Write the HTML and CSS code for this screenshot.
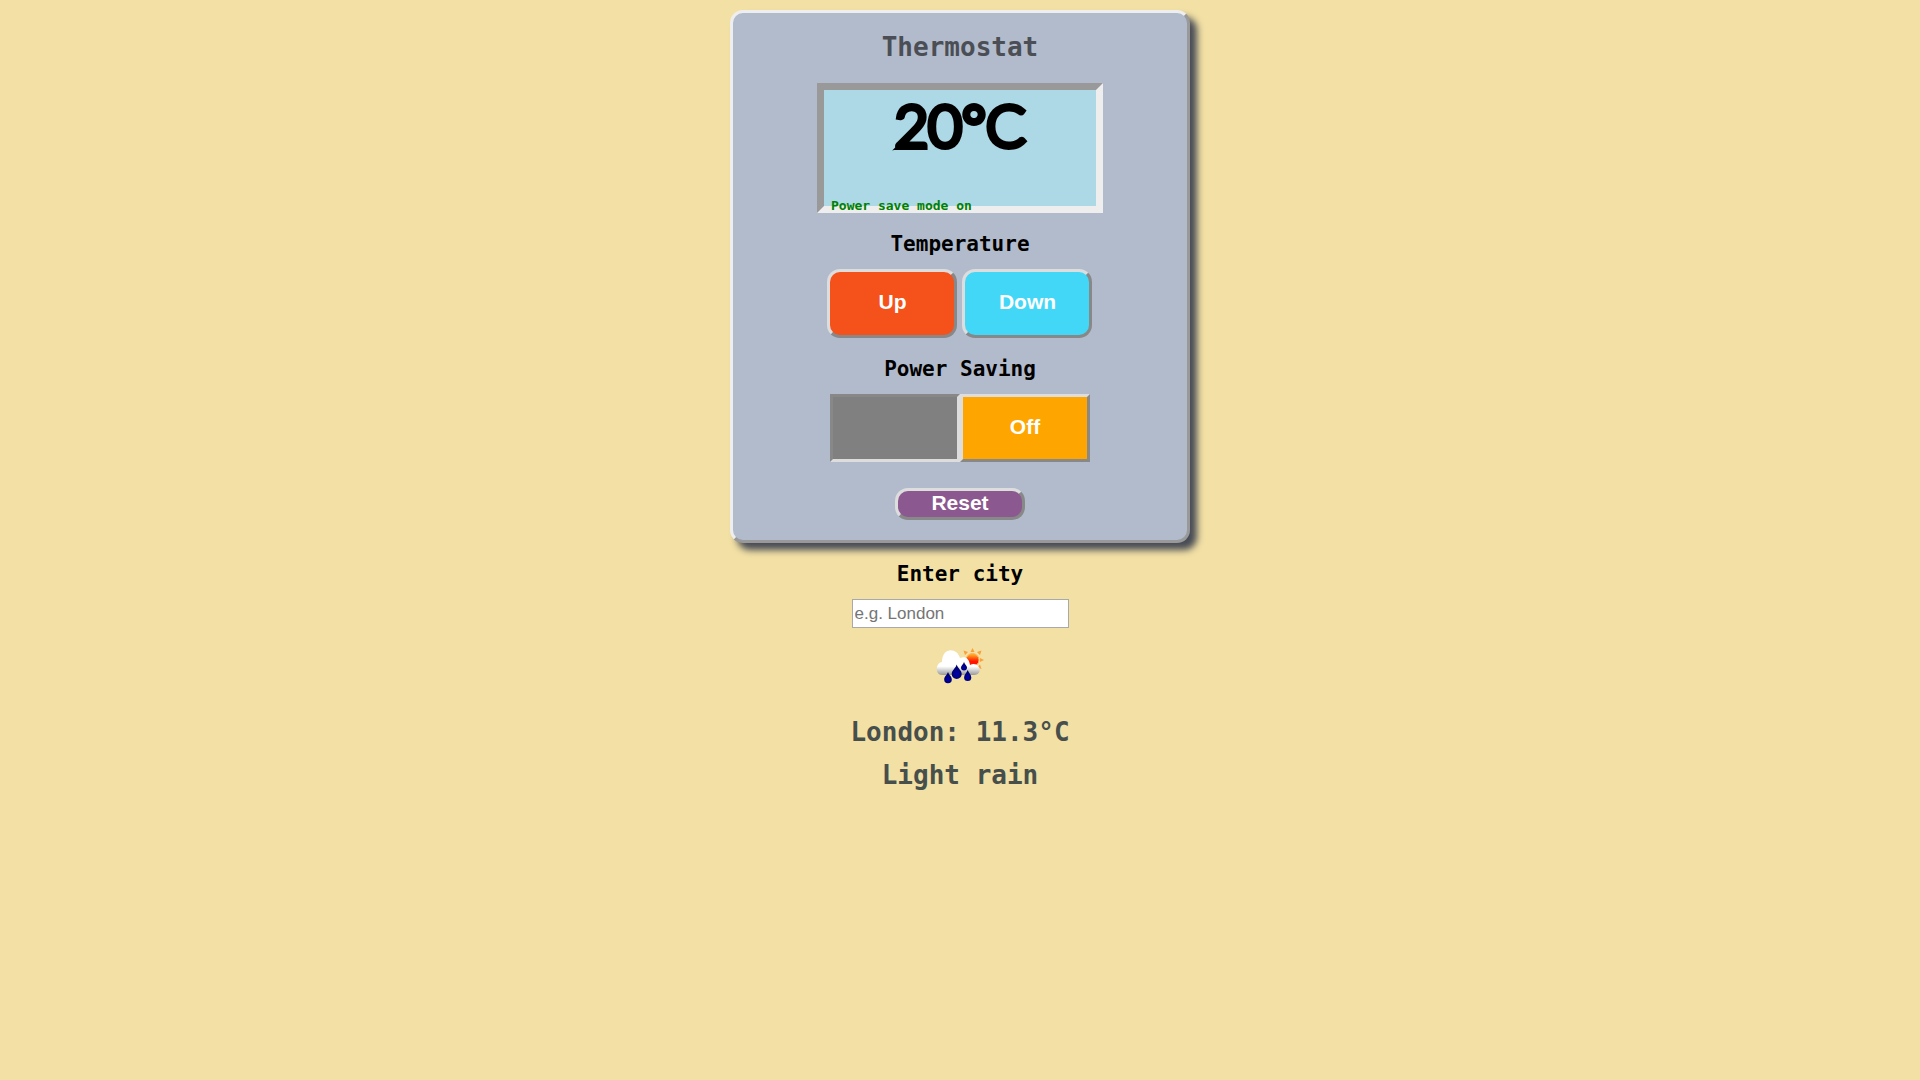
FILE: index.html
```html
<!DOCTYPE html>
<html lang="en">
<head>
<meta charset="utf-8">
<title>Thermostat</title>
<link rel="stylesheet" href="styles.css">
</head>
<body>
<main class="page">
  <section class="thermostat">
    <h1 class="title">Thermostat</h1>
    <div class="display">
      <p class="temperature">20°C</p>
      <p class="power-status">Power save mode on</p>
    </div>
    <h2 class="label">Temperature</h2>
    <div class="controls">
      <button class="button up" type="button">Up</button>
      <button class="button down" type="button">Down</button>
    </div>
    <h2 class="label">Power Saving</h2>
    <div class="switch">
      <button class="button pressed" type="button" aria-label="On" aria-pressed="true"></button>
      <button class="button off" type="button">Off</button>
    </div>
    <button class="button reset" type="button">Reset</button>
  </section>
  <section class="weather">
    <label class="label" for="city">Enter city</label>
    <input class="city" id="city" type="text" placeholder="e.g. London">
    <svg class="icon" viewBox="0 0 50 50" role="img" aria-label="Light rain">
      <defs>
        <linearGradient id="sun" x1="0" y1="0" x2="0" y2="1">
          <stop offset="0.1" stop-color="#ffa820"/><stop offset="0.6" stop-color="#ff1400"/>
        </linearGradient>
        <linearGradient id="cloud" x1="0" y1="0" x2="0" y2="1">
          <stop offset="0.65" stop-color="#fff"/><stop offset="1" stop-color="#999"/>
        </linearGradient>
        <radialGradient id="drop" cx="0.5" cy="0.65" r="0.6">
          <stop offset="0" stop-color="#0000b4"/><stop offset="1" stop-color="#000058"/>
        </radialGradient>
      </defs>
      <path fill="#f9a03a" d="M37.500 6l2 4h-4zM46.500 8.500l-1.500 4.500-3-3zM49 18l-4 2v-4zM46.500 27l-4.500-1.500 3-3zM28.500 8.500l4.500 1.500-3 3z"/>
      <circle cx="37.500" cy="18" r="6.500" fill="url(#sun)" stroke="#ffb057" stroke-width="1"/>
      <path fill="url(#cloud)" d="M7 33C0 33 0 21 7 20C7 5 22 5 25 16C30 14 34 16 35 23C38 21 42 22 43 24C47 28 44 33 39 33Z"/>
      <g fill="url(#drop)">
        <path d="M13 30c1 3 3.800 4.500 3.800 7.500a3.800 3.800 0 0 1-7.600 0c0-3 2.800-4.500 3.800-7.500z"/>
        <path d="M21.700 22.500c1.300 4 5 6 5 9.500a5 5 0 0 1-10 0c0-3.500 3.700-5.500 5-9.500z"/>
        <path d="M29 20c.8 2.500 3 3.500 3 5.500a3 3 0 0 1-6 0c0-2 2.200-3 3-5.500z"/>
        <path d="M32.700 28c1 3 3.600 4.500 3.600 7.500a3.600 3.600 0 0 1-7.200 0c0-3 2.600-4.500 3.600-7.500z"/>
      </g>
    </svg>
    <p class="report">London: 11.3°C</p>
    <p class="report">Light rain</p>
  </section>
</main>
</body>
</html>
```
FILE: styles.css
```css
* {
  box-sizing: border-box;
}

body {
  margin: 0;
  background: #f2e0a5;
  font-family: "DejaVu Sans Mono", monospace;
  font-weight: bold;
}

h1,
h2,
p {
  margin: 0;
}

.page {
  display: flex;
  flex-direction: column;
  align-items: center;
  padding: 10px 0;
}

.thermostat {
  display: flex;
  flex-direction: column;
  align-items: center;
  width: 24%;
  min-width: 320px;
  padding: 19px 0 20px;
  border: 3px solid;
  border-color: #eee #999 #999 #eee;
  border-radius: 13px;
  background: #b2bbcc;
  box-shadow: 7px 7px 7px #474b55;
}

.title {
  font-size: 26px;
  line-height: 30px;
  color: #4b4f55;
}

.display {
  position: relative;
  width: 286px;
  height: 130px;
  margin-top: 21px;
  border: 7px solid;
  border-color: #999 #eee #eee #999;
  background: lightblue;
}

.temperature {
  font-family: Lato, sans-serif;
  font-weight: 300;
  font-size: 58px;
  line-height: 69px;
  text-align: center;
  -webkit-text-stroke: 6px #000;
  stroke-linejoin: round;
}

.power-status {
  position: absolute;
  left: 7px;
  bottom: -8px;
  font-size: 13px;
  line-height: 16px;
  color: green;
}

.label {
  margin: 19px 0 13px;
  font-size: 21px;
  line-height: 24px;
}

.controls {
  display: flex;
  gap: 5px;
}

.switch {
  display: flex;
}

.button {
  width: 130px;
  height: 69px;
  padding: 0 0 3px;
  border: 3px solid;
  border-color: #ddd #888 #888 #ddd;
  font: bold 21px "Liberation Sans", Arial, sans-serif;
  color: #fff;
}

.up,
.down {
  border-radius: 13px;
}

.up {
  background: #f4511b;
}

.down {
  background: #43d7f7;
}

.switch .button {
  height: 68px;
}

.pressed {
  border-color: #888 #ddd #ddd #888;
  background: gray;
}

.off {
  background: orange;
}

.reset {
  height: 32px;
  margin-top: 26px;
  border-radius: 13px;
  background: #8b588f;
  line-height: 23px;
}

.weather {
  display: flex;
  flex-direction: column;
  align-items: center;
}

.city {
  width: 217px;
  height: 29px;
  padding: 1px 2px;
  border: 1px solid #a9a9a9;
  background: #fff;
  font: 17px "Liberation Sans", Arial, sans-serif;
}

.city::placeholder {
  color: #757575;
}

.icon {
  width: 50px;
  height: 50px;
  margin: 14px 0 19px;
}

.report {
  font-size: 26px;
  line-height: 43px;
  color: #474f4c;
}
```
